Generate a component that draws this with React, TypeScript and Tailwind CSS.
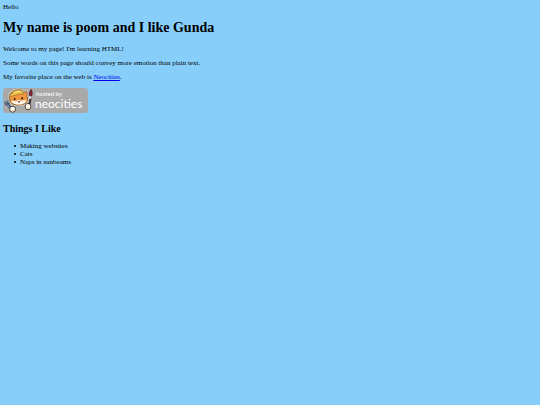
const likes = ["Making websites", "Cats", "Naps in sunbeams"];

function CatMascot() {
  return (
    <svg viewBox="0 0 32 26" className="h-[26px] w-[32px] shrink-0" aria-hidden="true">
      {/* fork */}
      <path d="M4.6 16 L8.4 22" stroke="#34465c" strokeWidth="2.4" strokeLinecap="round" />
      <path
        d="M1.8 13.6 L2.6 16.4 Q4.6 18 6.6 14.8 L6 12 M3.9 12.6 L4.8 16.6"
        fill="none"
        stroke="#3d5572"
        strokeWidth="1.2"
      />
      <path d="M4.6 16.4 L8 22" stroke="#8fb0d0" strokeWidth="1" />
      {/* brush */}
      <path d="M28 9 L26 18" stroke="#3a2428" strokeWidth="1.8" strokeLinecap="round" />
      <path d="M26.4 7.2 Q26.2 3.8 28.2 1.6 Q30 4.2 28.8 7.8 Z" fill="#a51f35" stroke="#3c1822" strokeWidth="0.8" />
      <path d="M26.4 8 L28.8 8.4 L28.3 11 L26.1 10.6 Z" fill="#dfe3e8" />
      {/* head */}
      <path
        d="M6.6 9 Q6.6 4.6 9.4 3.8 Q12 1.2 16.6 1.8 Q19.4 2 20.6 4.4 L24 3.4 L24.2 8.6 Q26 12.6 22.8 15.2 Q19 17.8 14 17.2 Q8.4 16.8 6.8 13 Z"
        fill="#f0963c"
        stroke="#fff6e6"
        strokeWidth="1.8"
      />
      <path
        d="M6.6 9 Q6.6 4.6 9.4 3.8 Q12 1.2 16.6 1.8 Q19.4 2 20.6 4.4 L24 3.4 L24.2 8.6 Q26 12.6 22.8 15.2 Q19 17.8 14 17.2 Q8.4 16.8 6.8 13 Z"
        fill="#f0963c"
        stroke="#5a3a20"
        strokeWidth="0.7"
      />
      <path d="M7.8 13.2 Q10.4 12.4 13 13.4 Q15.6 11 18.2 13 Q21 11.8 23.8 12.6 Q22.4 15.4 18 16.5 Q10.6 17 7.8 13.2 Z" fill="#fffaf0" />
      {/* hard hat */}
      <path
        d="M6 9.4 Q7.4 6.8 9 4.8 Q11.6 1.8 16.4 2 Q20.2 2.2 21 6.4 Q17.6 5.6 14 6.8 Q9.8 7.8 6 9.4 Z"
        fill="#f0bf48"
        stroke="#a07628"
        strokeWidth="0.7"
      />
      <path d="M11.4 4.6 Q14.4 2.8 17.8 3.6" fill="none" stroke="#ffe28a" strokeWidth="1.1" />
      {/* face */}
      <ellipse cx="11.6" cy="11" rx="0.8" ry="1.2" fill="#251d1c" />
      <ellipse cx="19.2" cy="10.2" rx="0.8" ry="1.2" fill="#251d1c" />
      <path d="M14.6 13.6 Q16 15.2 17.4 13.4 Z" fill="#cf4a4a" stroke="#512621" strokeWidth="0.4" />
      {/* paws */}
      <ellipse cx="9.6" cy="21.2" rx="3" ry="3" fill="#fffaf0" stroke="#2c2118" strokeWidth="0.8" />
      <ellipse cx="25" cy="18.6" rx="2.9" ry="3.2" fill="#fffaf0" stroke="#2c2118" strokeWidth="0.8" />
      <path d="M9 22.4 L10.8 22.6 M24.4 20 L26 20" stroke="#e6b67c" strokeWidth="0.9" />
    </svg>
  );
}

function NeocitiesBadge() {
  return (
    <a
      href="https://neocities.org"
      className="flex h-[25px] w-[85px] items-center rounded-[3px] bg-[#a9a9a9] text-white"
    >
      <CatMascot />
      <span className="flex flex-col font-[Lato,sans-serif]">
        <span className="pl-px text-[6px] leading-[7px]">hosted by</span>
        <span className="text-[12px] leading-[14px]">neocities</span>
      </span>
    </a>
  );
}

export default function App() {
  return (
    <main className="min-h-screen bg-[#87cefa] p-[3px] font-['Liberation_Serif',serif] text-[7px] leading-[8px] text-black">
      <div>Hello</div>
      <h1 className="mt-[9px] text-[14px] leading-[16px] font-bold">
        My name is poom and I like Gunda
      </h1>
      <div className="mt-[9px] flex flex-col gap-[6px]">
        <p>Welcome to my page! I'm learning HTML!</p>
        <p>Some words on this page should convey more emotion than plain text.</p>
        <p>
          My favorite place on the web is{" "}
          <a href="https://neocities.org" className="text-[#0000ee] underline">
            Neocities
          </a>
          .
        </p>
      </div>
      <div className="mt-[7px] flex">
        <NeocitiesBadge />
      </div>
      <h2 className="mt-[10px] text-[10px] leading-[12px] font-bold">Things I Like</h2>
      <ul className="mt-[7px] pl-[11px]">
        {likes.map((item) => (
          <li
            key={item}
            className="flex items-center gap-1 before:size-[2px] before:rounded-full before:bg-black before:content-['']"
          >
            {item}
          </li>
        ))}
      </ul>
    </main>
  );
}
